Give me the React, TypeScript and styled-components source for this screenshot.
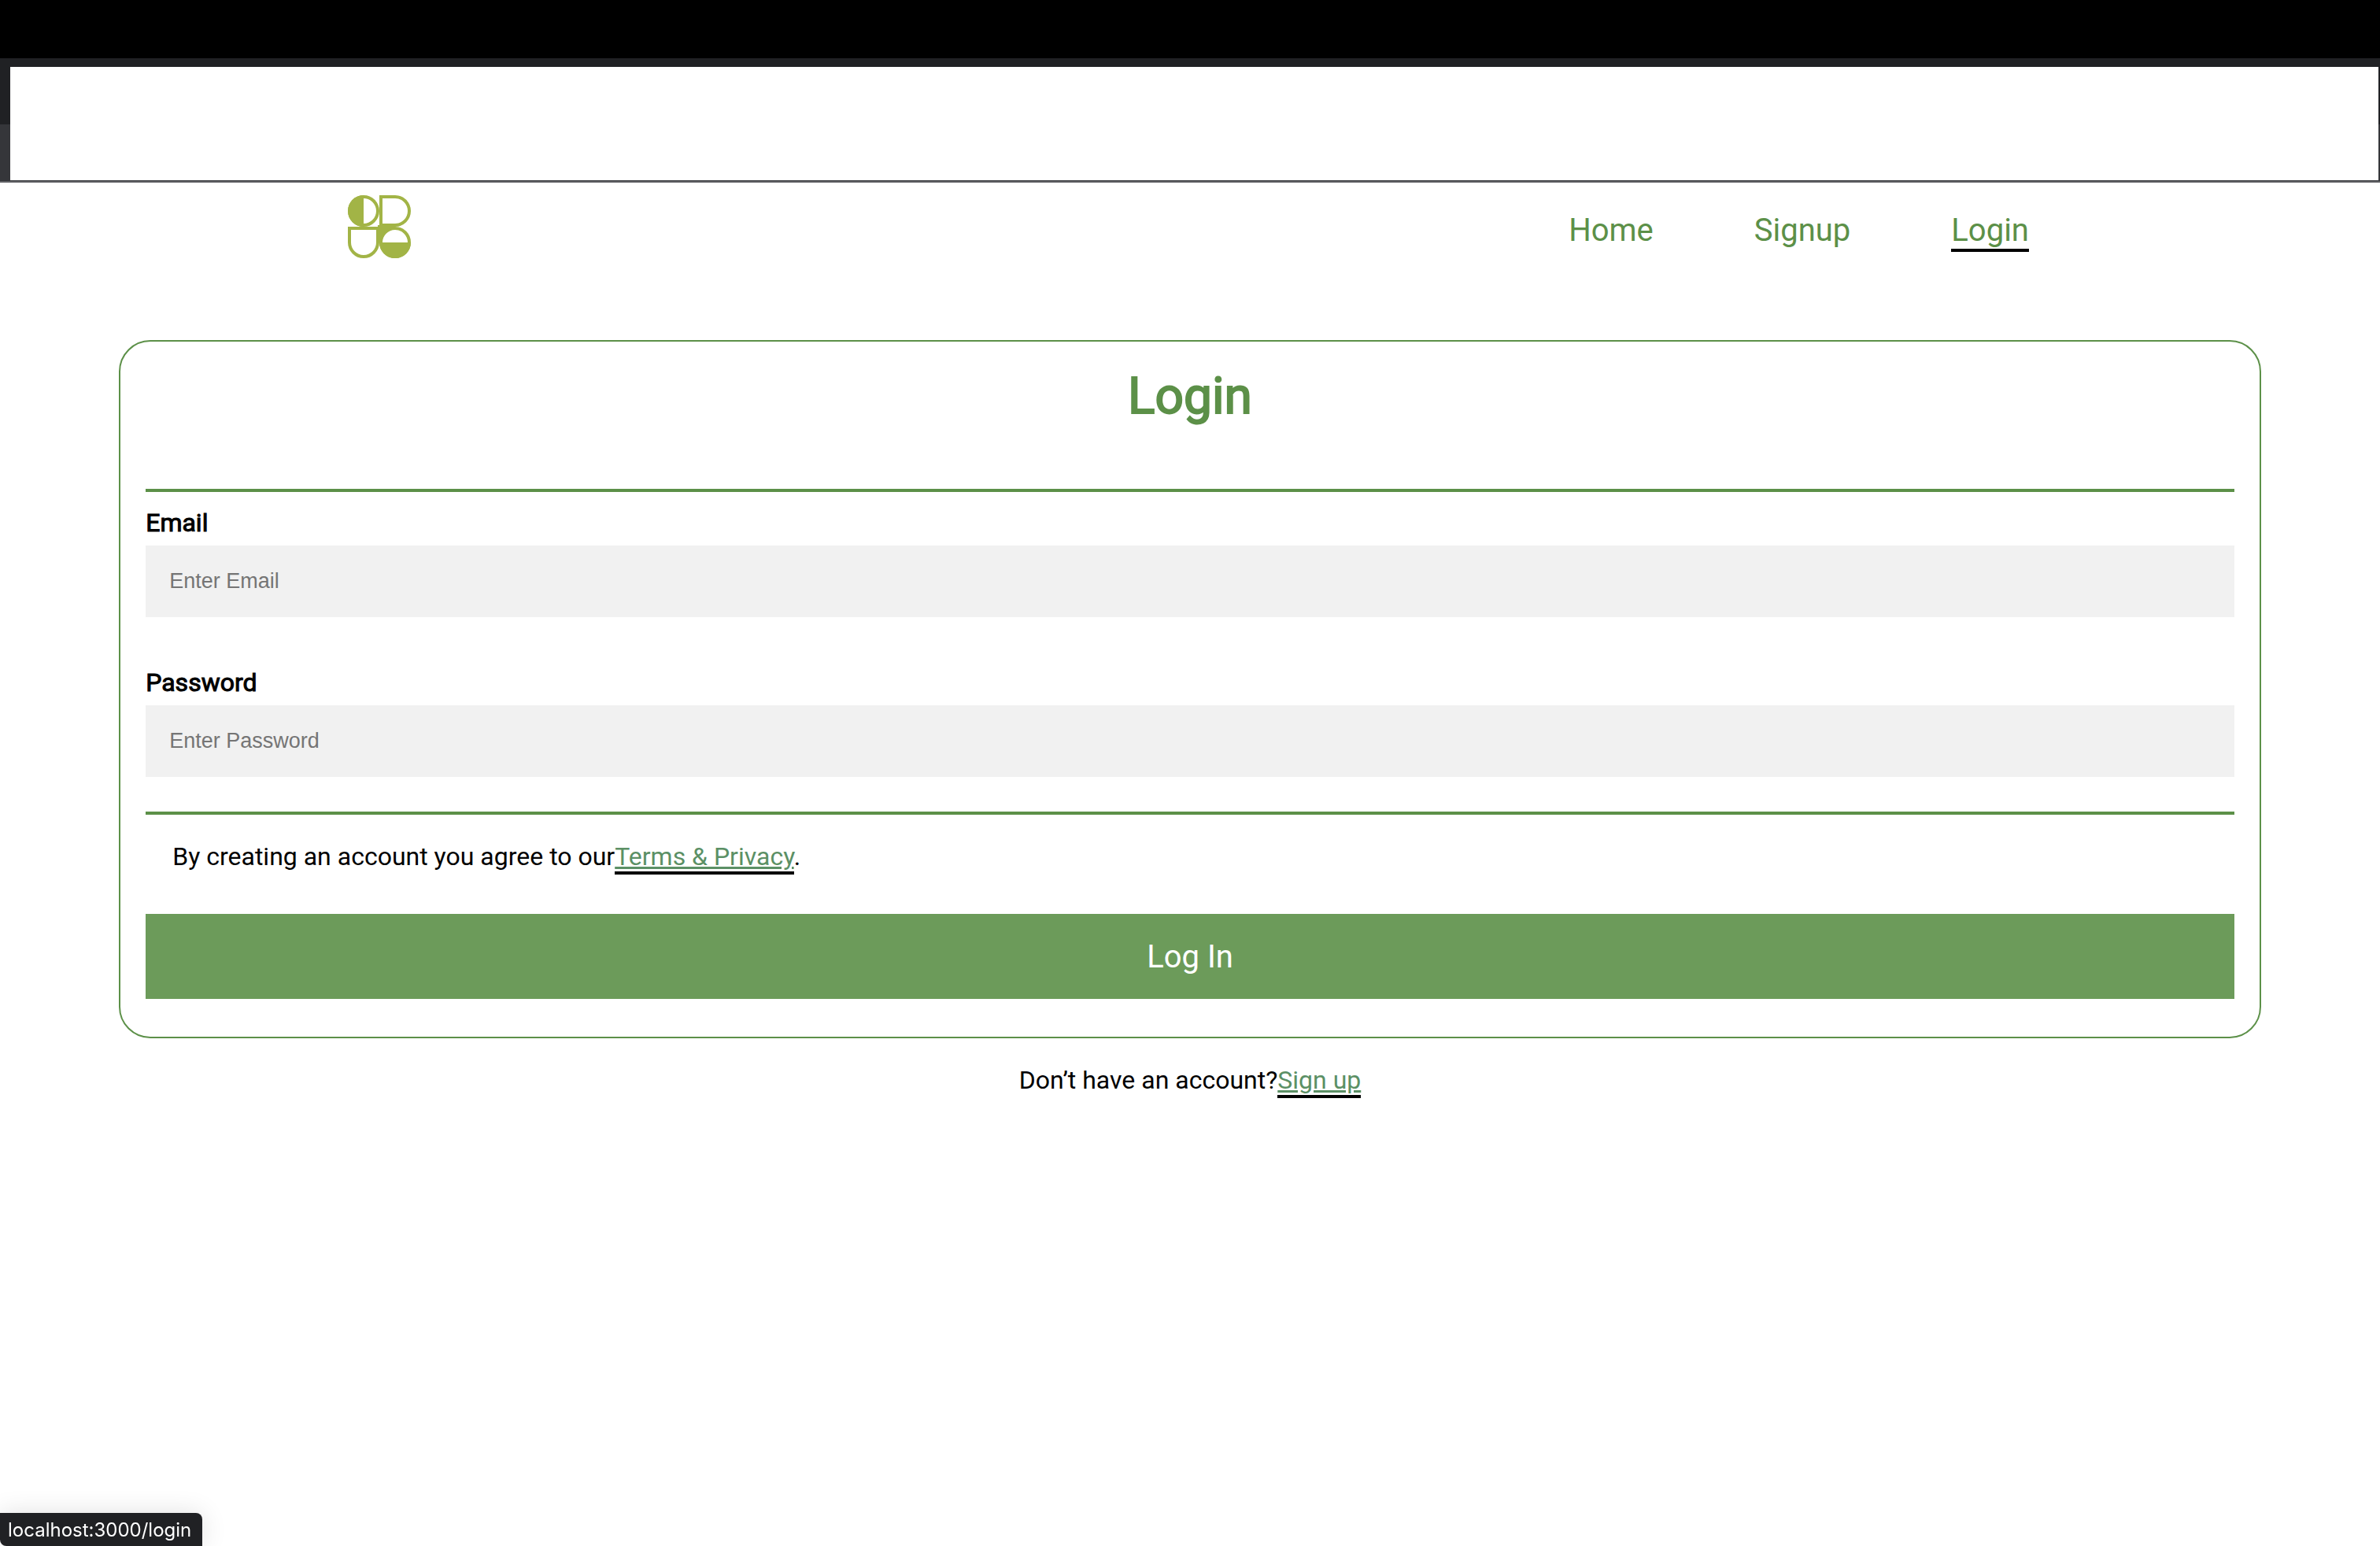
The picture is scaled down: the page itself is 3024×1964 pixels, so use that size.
import React from "react";
import styled, { createGlobalStyle } from "styled-components";

const green = "#5c9048";
const linkGreen = "#5b9065";

const GlobalStyle = createGlobalStyle`
  *, *::before, *::after { box-sizing: border-box; }
  html, body { margin: 0; background: #fff; }
  body { font-family: Roboto, "Liberation Sans", sans-serif; font-size: 32px; line-height: 38px; color: #000; }
`;

const Page = styled.div`
  min-height: 100vh;
  display: flex;
  flex-direction: column;
`;

const MenuBar = styled.div`
  height: 74px;
  background: #000;
`;

const BrowserChrome = styled.div`
  height: 158px;
  padding: 11px 2px 1px 13px;
  border-bottom: 2px solid #5f6064;
  background: linear-gradient(#202124 84px, #35363a 84px);
`;

const ChromeCover = styled.div`
  height: 100%;
  background: #fff;
`;

const Header = styled.header`
  display: flex;
  align-items: center;
  justify-content: space-between;
  padding: 16px 14.75% 16px 14.6%;
`;

const LogoLink = styled.a`
  display: block;
  width: 80px;
  height: 80px;
`;

const Nav = styled.nav`
  display: flex;
  gap: 128px;
  padding-top: 9px;
  font-size: 40px;
  line-height: 47px;
`;

const NavItem = styled.div`
  height: 47px;
`;

const NavLink = styled.a<{ $active?: boolean }>`
  color: ${green};
  text-decoration: none;
  border-bottom: ${(p) => (p.$active ? "4px solid #000" : "none")};
`;

const Card = styled.form`
  margin: 88px 5% 0;
  padding: 32px 32px 48px;
  border: 2px solid ${green};
  border-radius: 40px;
`;

const Title = styled.h1`
  margin: 0 0 79px;
  font-size: 64px;
  line-height: 76px;
  font-weight: 400;
  text-align: center;
  color: ${green};
  -webkit-text-stroke: 2px ${green};
`;

const Rule = styled.hr`
  height: 4px;
  margin: 0;
  border: 0;
  background: ${green};
`;

const Fields = styled.div`
  display: flex;
  flex-direction: column;
  gap: 64px;
  padding: 20px 0 44px;
`;

const Field = styled.div`
  display: flex;
  flex-direction: column;
  gap: 10px;
`;

const Label = styled.label`
  -webkit-text-stroke: 1px #000;
`;

const Input = styled.input`
  width: 100%;
  height: 91px;
  padding: 0 30px;
  border: 0;
  background: #f1f1f1;
  font-family: "Liberation Sans", Arial, sans-serif;
  font-size: 27px;
  &::placeholder { color: #757575; opacity: 1; }
`;

const Terms = styled.p`
  margin: 34px 0 54px;
  padding: 0 34px;
`;

const TextLink = styled.a`
  color: ${linkGreen};
  text-decoration: underline;
  border-bottom: 4px solid #000;
`;

const Submit = styled.button`
  display: block;
  width: 100%;
  height: 108px;
  padding: 0;
  border: 0;
  background: #6c9b5a;
  color: #fff;
  font-family: inherit;
  font-size: 40px;
  cursor: pointer;
`;

const SignupPrompt = styled.p`
  margin: 34px 0 0;
  text-align: center;
`;

const StatusBubble = styled.div`
  position: fixed;
  left: 0;
  bottom: 0;
  height: 42px;
  padding: 0 14px 0 10px;
  border-radius: 0 8px 0 8px;
  background: #202124;
  color: #fff;
  font-family: Inter, sans-serif;
  font-size: 24px;
  line-height: 44px;
  box-shadow: 0 0 32px rgba(0, 0, 0, 0.12);
`;

function Logo() {
  return (
    <svg width="80" height="80" viewBox="0 0 80 80" fill="none" stroke="#a2b446" strokeWidth="4" role="img" aria-label="Logo">
      <circle cx="20" cy="20" r="18" />
      <path d="M20 0a20 20 0 0 0 0 40z" fill="#a2b446" stroke="none" />
      <path d="M42 2h18a18 18 0 0 1 0 36h-18z" />
      <path d="M2 42h36v18a18 18 0 0 1-36 0z" />
      <circle cx="60" cy="60" r="18" />
      <path d="M40 60a20 20 0 0 0 40 0zM38 38h22v3a19 19 0 0 0-19 19h-3z" fill="#a2b446" stroke="none" />
    </svg>
  );
}

export default function App() {
  return (
    <Page>
      <GlobalStyle />
      <MenuBar />
      <BrowserChrome>
        <ChromeCover />
      </BrowserChrome>
      <Header>
        <LogoLink href="#home">
          <Logo />
        </LogoLink>
        <Nav>
          <NavItem><NavLink href="#home">Home</NavLink></NavItem>
          <NavItem><NavLink href="#signup">Signup</NavLink></NavItem>
          <NavItem><NavLink href="#login" $active>Login</NavLink></NavItem>
        </Nav>
      </Header>
      <main>
        <Card onSubmit={(e) => e.preventDefault()}>
          <Title>Login</Title>
          <Rule />
          <Fields>
            <Field>
              <Label htmlFor="email">Email</Label>
              <Input id="email" type="text" placeholder="Enter Email" />
            </Field>
            <Field>
              <Label htmlFor="password">Password</Label>
              <Input id="password" type="password" placeholder="Enter Password" />
            </Field>
          </Fields>
          <Rule />
          <Terms>
            By creating an account you agree to our<TextLink href="#terms">Terms &amp; Privacy</TextLink>.
          </Terms>
          <Submit type="submit">Log In</Submit>
        </Card>
        <SignupPrompt>
          Don’t have an account?<TextLink href="#signup">Sign up</TextLink>
        </SignupPrompt>
      </main>
      <StatusBubble>localhost:3000/login</StatusBubble>
    </Page>
  );
}
